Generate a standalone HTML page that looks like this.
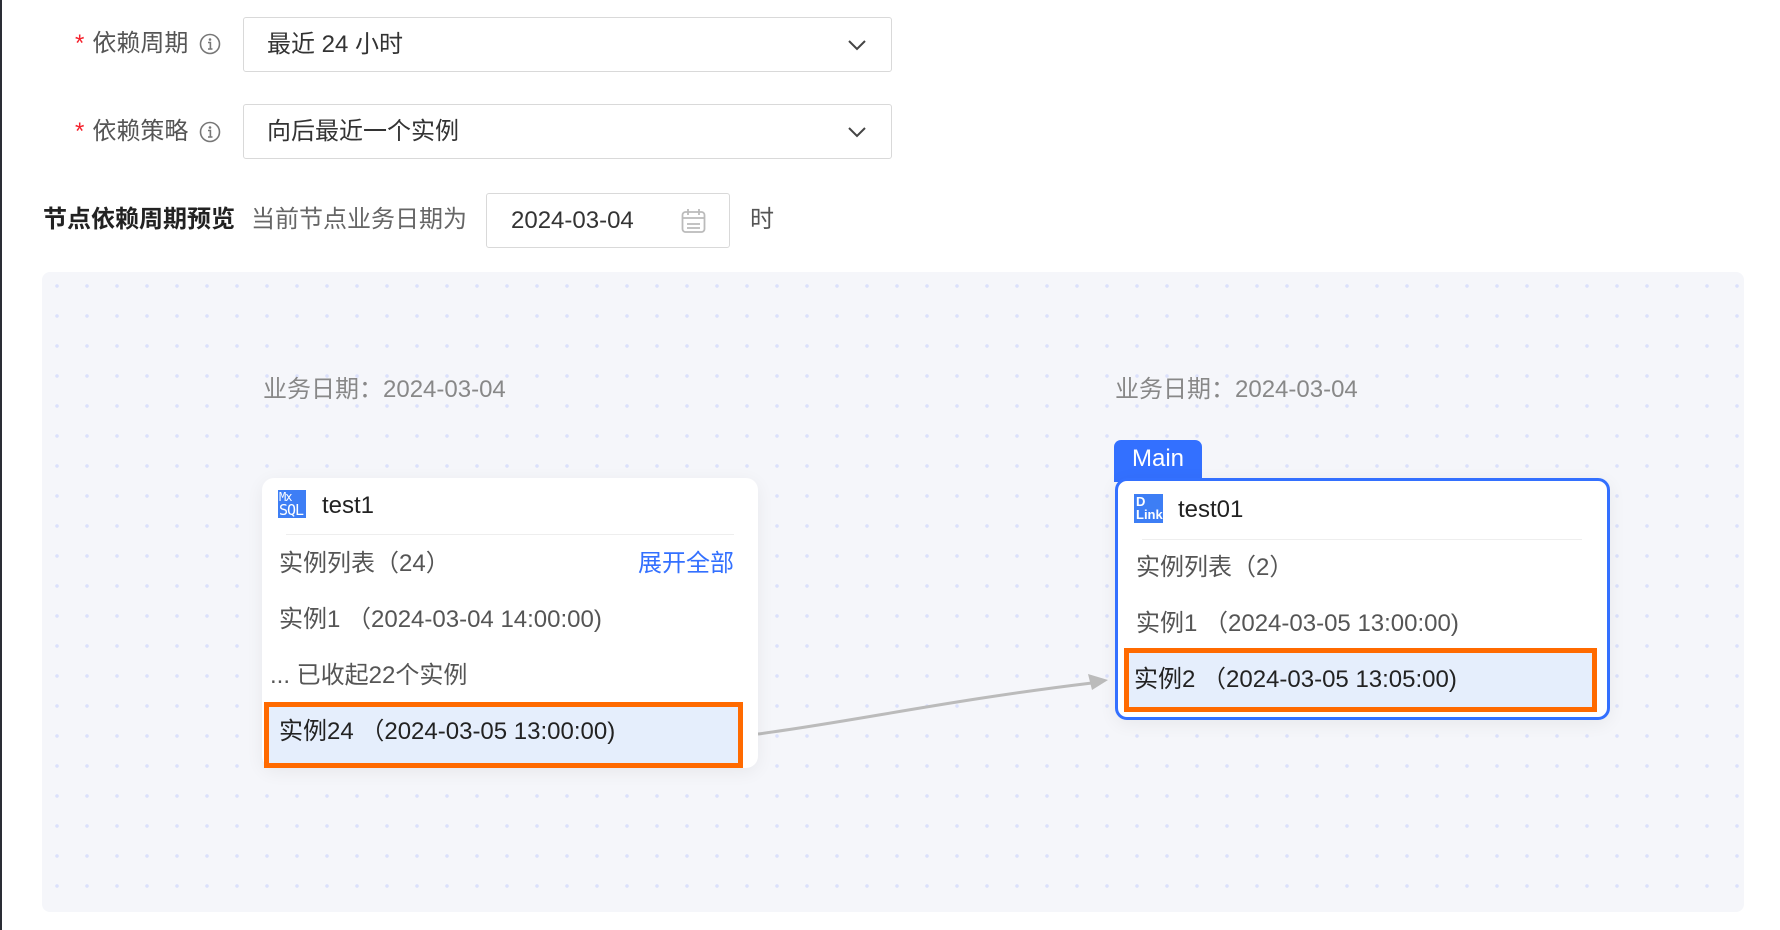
<!DOCTYPE html>
<html><head><meta charset="utf-8"><style>
*{box-sizing:border-box;margin:0;padding:0}
body{width:1780px;height:930px;background:#fff;position:relative;overflow:hidden;font-family:"Liberation Sans","Noto Sans CJK SC",sans-serif;color:#333;font-size:24px}
.abs{position:absolute}
.lbl{position:absolute;color:#555;line-height:30px;white-space:nowrap}
.star{color:#f5222d;margin-right:8px}
.sel{position:absolute;left:243px;width:649px;height:55px;border:1px solid #d9d9d9;border-radius:3px;background:#fff}
.sel span{position:absolute;left:23px;top:12px;line-height:30px;color:#333}
.sel svg{position:absolute;left:604px;top:21px}
.canvas{position:absolute;left:42px;top:272px;width:1702px;height:640px;border-radius:8px;background-color:#f5f6fa;background-image:radial-gradient(circle,#dbe1fb 1.6px,transparent 2px);background-size:30px 30px;background-position:0px -1px}
.card{position:absolute;background:#fff;border-radius:12px;box-shadow:0 4px 18px rgba(0,0,0,.06)}
.t{position:absolute;white-space:nowrap;line-height:30px}
.hl{position:absolute;background:#e5eefc;border:5px solid #ff6a00}
</style></head><body>
<div class="abs" style="left:0;top:0;width:2px;height:930px;background:#2a2d35"></div>

<div class="lbl" style="left:75px;top:29px"><span class="star">*</span>依赖周期</div>
<svg class="abs" style="left:199px;top:33px" width="22" height="22" viewBox="0 0 22 22"><circle cx="11" cy="11" r="9.5" fill="none" stroke="#777" stroke-width="1.6"/><circle cx="11" cy="6.5" r="1.3" fill="#777"/><path d="M9 9.5h2.4v6.5M9 16h4.5" stroke="#777" stroke-width="1.6" fill="none"/></svg>
<div class="sel" style="top:17px"><span>最近 24 小时</span><svg width="18" height="12" viewBox="0 0 18 12"><path d="M1 2l8 8 8-8" fill="none" stroke="#444" stroke-width="2"/></svg></div>

<div class="lbl" style="left:75px;top:117px"><span class="star">*</span>依赖策略</div>
<svg class="abs" style="left:199px;top:121px" width="22" height="22" viewBox="0 0 22 22"><circle cx="11" cy="11" r="9.5" fill="none" stroke="#777" stroke-width="1.6"/><circle cx="11" cy="6.5" r="1.3" fill="#777"/><path d="M9 9.5h2.4v6.5M9 16h4.5" stroke="#777" stroke-width="1.6" fill="none"/></svg>
<div class="sel" style="top:104px"><span>向后最近一个实例</span><svg width="18" height="12" viewBox="0 0 18 12"><path d="M1 2l8 8 8-8" fill="none" stroke="#444" stroke-width="2"/></svg></div>

<div class="lbl" style="left:43px;top:205px;color:#222;font-weight:bold">节点依赖周期预览</div>
<div class="lbl" style="left:251px;top:205px;color:#666">当前节点业务日期为</div>
<div class="abs" style="left:486px;top:193px;width:244px;height:55px;border:1px solid #d9d9d9;border-radius:3px;background:#fff">
<span class="t" style="left:24px;top:12px;color:#333">2024-03-04</span>
<svg class="abs" style="left:194px;top:14px" width="25" height="26" viewBox="0 0 25 26"><rect x="1.5" y="4" width="22" height="20" rx="3" fill="none" stroke="#bbb" stroke-width="1.8"/><path d="M7 1v6M18 1v6M1.5 10h22M6 16h13M6 20h13" stroke="#bbb" stroke-width="1.8" fill="none"/></svg>
</div>
<div class="lbl" style="left:750px;top:205px;color:#555">时</div>

<div class="canvas"></div>

<div class="t" style="left:263px;top:375px;color:#888">业务日期：2024-03-04</div>
<div class="t" style="left:1115px;top:375px;color:#888">业务日期：2024-03-04</div>

<svg class="abs" style="left:0;top:0" width="1780" height="930"><path d="M758 734 C 850 722, 950 700, 1092 683" fill="none" stroke="#bbb" stroke-width="3"/><path d="M1108 680 L1088 674 L1092 690 Z" fill="#bbb"/></svg>

<!-- card1 -->
<div class="card" style="left:262px;top:478px;width:496px;height:290px">
<div class="abs" style="left:16px;top:12px;width:28px;height:28px;background:#3d7ef5;color:#fff;font-size:12px;line-height:12px;font-family:'DejaVu Sans Mono',monospace;padding:1px 1px;letter-spacing:-1px">Mx<br><span style="font-size:15px;line-height:15px">SQL</span></div>
<div class="t" style="left:60px;top:13px;color:#222">test1</div>
<div class="abs" style="left:24px;top:56px;width:448px;height:1px;background:#eee"></div>
<div class="t" style="left:17px;top:71px;color:#555">实例列表（24）</div>
<div class="t" style="left:376px;top:71px;color:#3370ff">展开全部</div>
<div class="t" style="left:17px;top:127px;color:#555">实例1 （2024-03-04 14:00:00)</div>
<div class="t" style="left:8px;top:183px;color:#555">... 已收起22个实例</div>
</div>
<div class="hl" style="left:264px;top:702px;width:479px;height:66px"></div>
<div class="t" style="left:279px;top:717px;color:#222">实例24 （2024-03-05 13:00:00)</div>

<!-- card2 -->
<div class="abs" style="left:1114px;top:440px;width:88px;height:42px;background:#3370ff;border-radius:7px 7px 0 0;color:#fff;font-size:24px;line-height:38px;text-align:center">Main</div>
<div class="card" style="left:1115px;top:478px;width:495px;height:242px;border:3px solid #3370ff;border-radius:12px">
<div class="abs" style="left:16px;top:13px;width:29px;height:29px;background:#3d7ef5;color:#fff;font-size:13px;line-height:13px;padding:1px 2px;font-weight:bold">D<br>Link</div>
<div class="t" style="left:60px;top:14px;color:#222">test01</div>
<div class="abs" style="left:24px;top:58px;width:440px;height:1px;background:#eee"></div>
<div class="t" style="left:18px;top:72px;color:#555">实例列表（2）</div>
<div class="t" style="left:18px;top:128px;color:#555">实例1 （2024-03-05 13:00:00)</div>
</div>
<div class="hl" style="left:1124px;top:648px;width:473px;height:64px"></div>
<div class="t" style="left:1134px;top:665px;color:#222">实例2 （2024-03-05 13:05:00)</div>
</body></html>
